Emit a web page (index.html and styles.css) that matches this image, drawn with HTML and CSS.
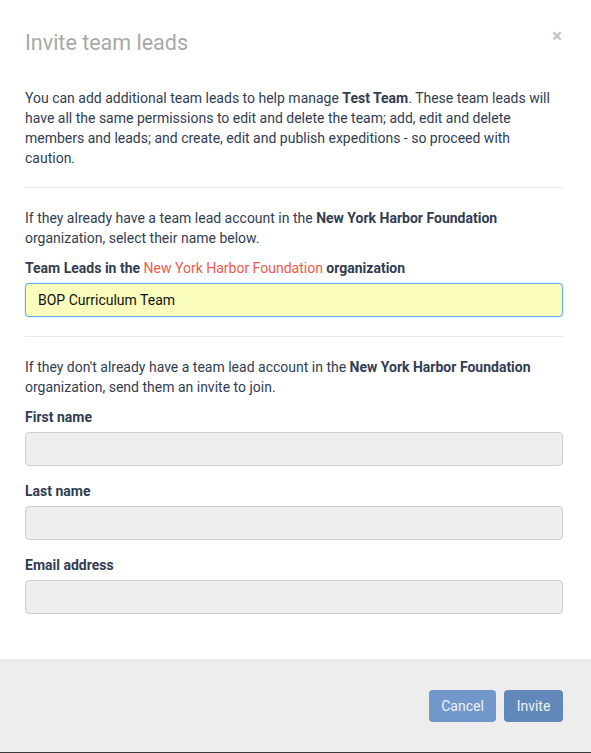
FILE: index.html
```html
<!DOCTYPE html>
<html lang="en">
<head>
<meta charset="utf-8">
<title>Invite team leads</title>
<link rel="stylesheet" href="styles.css">
</head>
<body>
<div class="modal">
  <div class="modal-header">
    <h2 class="modal-title">Invite team leads</h2>
    <span class="close">&times;</span>
  </div>
  <div class="modal-body">
    <p class="text">You can add additional team leads to help manage <strong>Test Team</strong>. These team leads will have all the same permissions to edit and delete the team; add, edit and delete members and leads; and create, edit and publish expeditions - so proceed with caution.</p>
    <hr class="divider">
    <p class="text">If they already have a team lead account in the <strong>New York Harbor Foundation</strong> organization, select their name below.</p>
    <div class="group">
      <label class="label">Team Leads in the <span class="accent">New York Harbor Foundation</span> organization</label>
      <div class="input input-selected">BOP Curriculum Team</div>
    </div>
    <hr class="divider">
    <p class="text">If they don't already have a team lead account in the <strong>New York Harbor Foundation</strong> organization, send them an invite to join.</p>
    <div class="group">
      <label class="label">First name</label>
      <div class="input"></div>
    </div>
    <div class="group group-spaced">
      <label class="label">Last name</label>
      <div class="input"></div>
    </div>
    <div class="group group-spaced">
      <label class="label">Email address</label>
      <div class="input"></div>
    </div>
  </div>
  <div class="modal-footer">
    <button class="btn btn-cancel">Cancel</button>
    <button class="btn btn-invite">Invite</button>
  </div>
</div>
</body>
</html>
```

FILE: styles.css
```css
* { box-sizing: border-box; }
html, body { margin: 0; padding: 0; background: #ffffff; }
body {
  font-family: Roboto, "Liberation Sans", Arial, sans-serif;
  font-size: 14px;
  line-height: 20px;
  color: #323d52;
}
.modal {
  width: 591px;
  height: 753px;
  display: flex;
  flex-direction: column;
  background: #ffffff;
  border-bottom: 1px solid #3a3a3a;
}
.modal-header {
  position: relative;
  padding: 30px 28px 0 25px;
}
.modal-title {
  margin: 0;
  font-size: 21.5px;
  line-height: 25px;
  font-weight: 400;
  color: #a8a8a8;
}
.close {
  position: absolute;
  top: 26px;
  right: 29px;
  font-size: 19px;
  line-height: 20px;
  font-weight: 700;
  color: #c4c4c4;
}
.modal-body {
  flex: 1;
  padding: 33px 28px 0 25px;
}
.text { margin: 0; }
.text strong { font-weight: 700; }
.divider {
  margin: 19px 0 20px;
  border: 0;
  border-top: 1px solid #e8e8e8;
  height: 0;
}
.group { margin-top: 10px; display: flex; flex-direction: column; gap: 5px; }
.group-spaced { margin-top: 15px; }
.label { font-weight: 700; display: block; }
.accent { color: #ee5b4b; font-weight: 400; }
.input {
  height: 34px;
  border: 1px solid #cfcfcf;
  border-radius: 4px;
  background: #eeeeee;
}
.input-selected {
  background: #fafcbc;
  border-color: #66afe9;
  box-shadow: 0 0 2px rgba(102, 175, 233, 0.6);
  padding: 0 12px;
  line-height: 32px;
  color: #111111;
}
.modal-footer {
  background: #ededed;
  padding: 31px 28px 30px;
  display: flex;
  justify-content: flex-end;
  gap: 8px;
}
.btn {
  height: 32px;
  padding: 0 12px;
  border: 0;
  border-radius: 4px;
  font-family: Roboto, "Liberation Sans", Arial, sans-serif;
  font-size: 14px;
  color: #eef2f8;
}
.btn-cancel { background: #7197cb; width: 67px; }
.btn-invite { background: #6288b9; width: 59px; }
```
